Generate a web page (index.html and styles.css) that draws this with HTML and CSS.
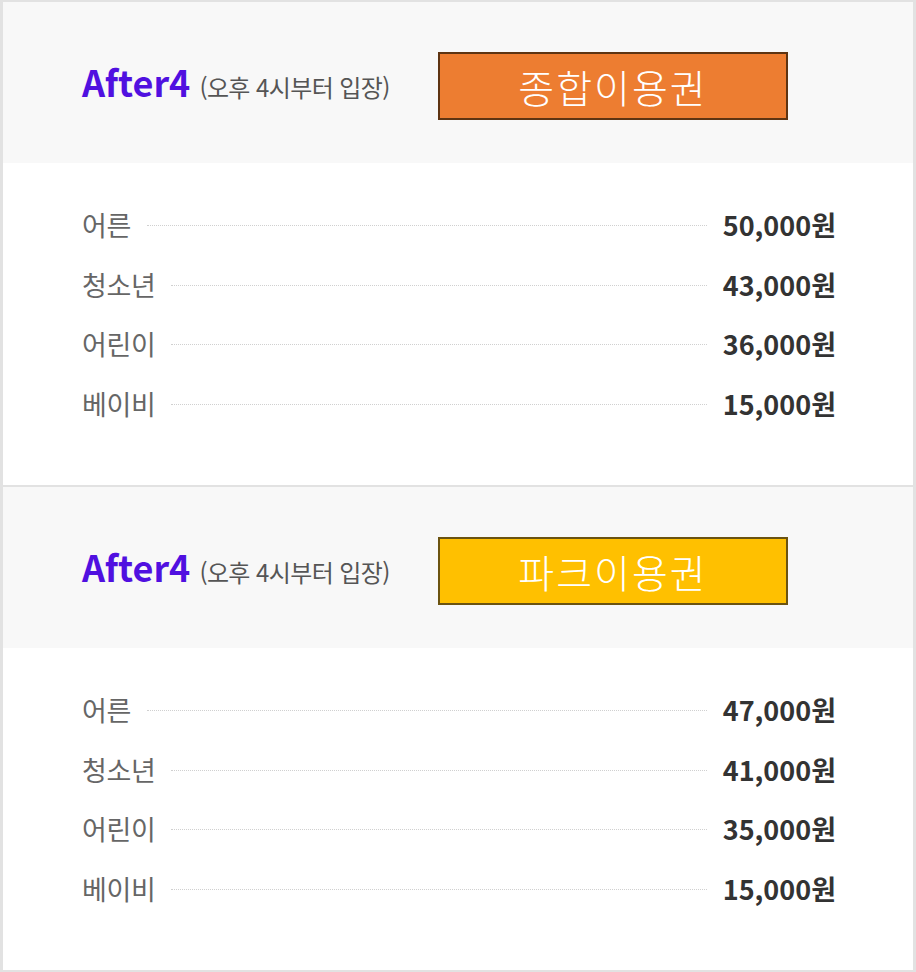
FILE: index.html
```html
<!DOCTYPE html>
<html lang="ko">
<head>
<meta charset="utf-8">
<title>After4 요금</title>
<link rel="stylesheet" href="styles.css">
</head>
<body>
<div class="frame">
  <section class="panel">
    <div class="head">
      <div class="title"><span class="brand">After4</span> <span class="sub">(오후 4시부터 입장)</span></div>
      <div class="ticket ticket-orange">종합이용권</div>
    </div>
    <ul class="prices">
      <li class="row"><span class="label">어른</span><span class="dots"></span><span class="price">50,000원</span></li>
      <li class="row"><span class="label">청소년</span><span class="dots"></span><span class="price">43,000원</span></li>
      <li class="row"><span class="label">어린이</span><span class="dots"></span><span class="price">36,000원</span></li>
      <li class="row"><span class="label">베이비</span><span class="dots"></span><span class="price">15,000원</span></li>
    </ul>
  </section>
  <section class="panel">
    <div class="head">
      <div class="title"><span class="brand">After4</span> <span class="sub">(오후 4시부터 입장)</span></div>
      <div class="ticket ticket-yellow">파크이용권</div>
    </div>
    <ul class="prices">
      <li class="row"><span class="label">어른</span><span class="dots"></span><span class="price">47,000원</span></li>
      <li class="row"><span class="label">청소년</span><span class="dots"></span><span class="price">41,000원</span></li>
      <li class="row"><span class="label">어린이</span><span class="dots"></span><span class="price">35,000원</span></li>
      <li class="row"><span class="label">베이비</span><span class="dots"></span><span class="price">15,000원</span></li>
    </ul>
  </section>
</div>
</body>
</html>
```

FILE: styles.css
```css
* { box-sizing: border-box; }
html, body {
  margin: 0;
  padding: 0;
  background: #fff;
}
body {
  font-family: "Noto Sans CJK KR", "Noto Sans", sans-serif;
}
.frame {
  width: 916px;
  height: 972px;
  border-style: solid;
  border-color: #e2e2e2;
  border-width: 2px 3px 2px 3px;
  display: flex;
  flex-direction: column;
}
.panel {
  height: 483px;
  display: flex;
  flex-direction: column;
}
.panel + .panel {
  border-top: 2px solid #e2e2e2;
}
.head {
  height: 161px;
  background: #f8f8f8;
  display: flex;
  align-items: center;
  padding-left: 79px;
  padding-top: 6px;
}
.title {
  width: 356px;
  display: flex;
  align-items: baseline;
  gap: 9px;
  white-space: nowrap;
  margin-top: -10px;
}
.brand {
  font-size: 36px;
  font-weight: 700;
  color: #5010e0;
  letter-spacing: 0;
}
.sub {
  font-size: 24px;
  color: #555;
  letter-spacing: -0.6px;
}
.ticket {
  width: 350px;
  height: 68px;
  border: 2px solid;
  display: flex;
  align-items: center;
  justify-content: center;
  color: #fff;
  font-size: 39px;
  font-weight: 300;
  letter-spacing: 2px;
}
.ticket-orange {
  background: #ed7d31;
  border-color: #5e3412;
}
.ticket-yellow {
  background: #ffc000;
  border-color: #6b5310;
}
.prices {
  list-style: none;
  margin: 0;
  padding: 32px 77px 0 79px;
}
.row {
  height: 59.5px;
  display: flex;
  align-items: center;
}
.label {
  font-size: 27px;
  color: #666;
  letter-spacing: -0.4px;
}
.dots {
  flex: 1;
  border-top: 1px dotted #d0d0d0;
  margin: 2px 16px 0 16px;
}
.price {
  font-size: 27px;
  font-weight: 700;
  color: #333;
  letter-spacing: 0;
}
```
